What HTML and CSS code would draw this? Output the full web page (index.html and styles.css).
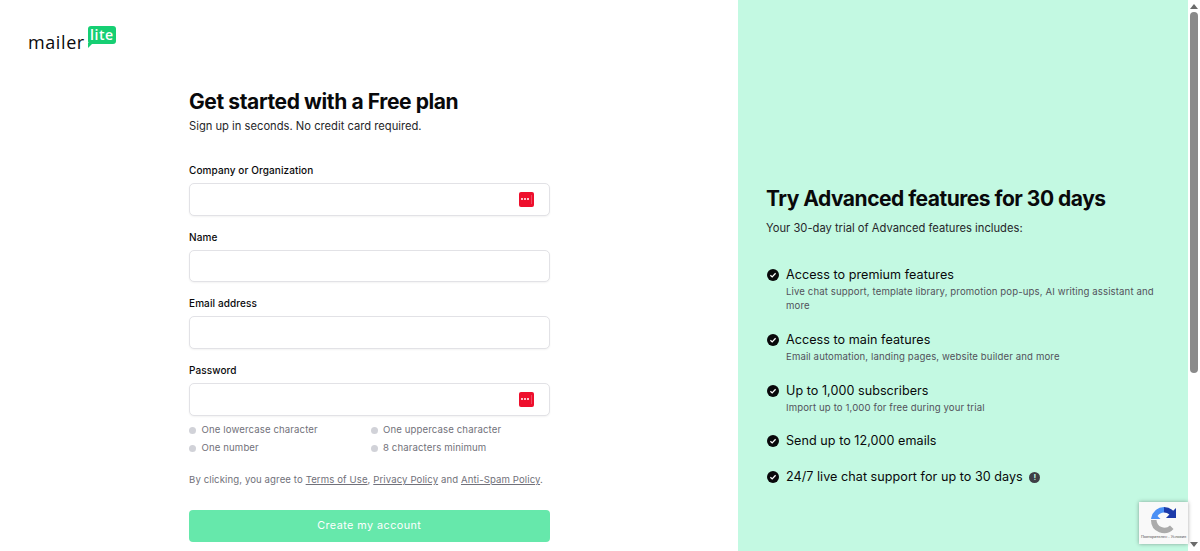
FILE: index.html
```html
<!DOCTYPE html>
<html>
<head>
    <title>MailerLite - Sign up</title>
    <link rel="stylesheet" href="styles.css">
</head>
<body>
    <div class="page">
        <div class="left">
            <a class="logo" href="#">
                <span class="logo-word">mailer</span>
                <span class="logo-bubble">lite</span>
            </a>
            <form class="signup">
                <h1>Get started with a Free plan</h1>
                <p class="sub">Sign up in seconds. No credit card required.</p>

                <div class="field first">
                    <label>Company or Organization</label>
                    <div class="input">
                        <span class="pass-icon"><i></i><i></i><i></i></span>
                    </div>
                </div>
                <div class="field">
                    <label>Name</label>
                    <div class="input"></div>
                </div>
                <div class="field">
                    <label>Email address</label>
                    <div class="input"></div>
                </div>
                <div class="field">
                    <label>Password</label>
                    <div class="input">
                        <span class="pass-icon"><i></i><i></i><i></i></span>
                    </div>
                </div>

                <ul class="rules">
                    <li>One lowercase character</li>
                    <li>One uppercase character</li>
                    <li>One number</li>
                    <li>8 characters minimum</li>
                </ul>

                <p class="terms">By clicking, you agree to <a href="#">Terms of Use</a>, <a href="#">Privacy Policy</a> and <a href="#">Anti-Spam Policy</a>.</p>

                <button type="button" class="submit">Create my account</button>
            </form>
        </div>

        <div class="right">
            <h2>Try Advanced features for 30 days</h2>
            <p class="intro">Your 30-day trial of Advanced features includes:</p>
            <ul class="features">
                <li>
                    <svg class="check" viewBox="0 0 12 12"><circle cx="6" cy="6" r="6" fill="#09090b"/><path d="M3.4 6.2l1.8 1.7 3.4-3.6" fill="none" stroke="#fff" stroke-width="1.3"/></svg>
                    <div>
                        <div class="feature-title">Access to premium features</div>
                        <div class="feature-text">Live chat support, template library, promotion pop-ups, AI writing assistant and more</div>
                    </div>
                </li>
                <li>
                    <svg class="check" viewBox="0 0 12 12"><circle cx="6" cy="6" r="6" fill="#09090b"/><path d="M3.4 6.2l1.8 1.7 3.4-3.6" fill="none" stroke="#fff" stroke-width="1.3"/></svg>
                    <div>
                        <div class="feature-title">Access to main features</div>
                        <div class="feature-text">Email automation, landing pages, website builder and more</div>
                    </div>
                </li>
                <li>
                    <svg class="check" viewBox="0 0 12 12"><circle cx="6" cy="6" r="6" fill="#09090b"/><path d="M3.4 6.2l1.8 1.7 3.4-3.6" fill="none" stroke="#fff" stroke-width="1.3"/></svg>
                    <div>
                        <div class="feature-title">Up to 1,000 subscribers</div>
                        <div class="feature-text">Import up to 1,000 for free during your trial</div>
                    </div>
                </li>
                <li>
                    <svg class="check" viewBox="0 0 12 12"><circle cx="6" cy="6" r="6" fill="#09090b"/><path d="M3.4 6.2l1.8 1.7 3.4-3.6" fill="none" stroke="#fff" stroke-width="1.3"/></svg>
                    <div>
                        <div class="feature-title">Send up to 12,000 emails</div>
                    </div>
                </li>
                <li>
                    <svg class="check" viewBox="0 0 12 12"><circle cx="6" cy="6" r="6" fill="#09090b"/><path d="M3.4 6.2l1.8 1.7 3.4-3.6" fill="none" stroke="#fff" stroke-width="1.3"/></svg>
                    <div>
                        <div class="feature-title">24/7 live chat support for up to 30 days <span class="info">!</span></div>
                    </div>
                </li>
            </ul>
        </div>

        <div class="scrollbar">
            <span class="arrow-up"></span>
            <span class="thumb"></span>
            <span class="arrow-down"></span>
        </div>

        <div class="recaptcha">
            <svg class="recaptcha-logo" viewBox="0 0 28 28">
                <path d="M14 1a13 13 0 0 1 9.2 3.8L26 2v10H16l3.4-3.4A8 8 0 0 0 14 6.4z" fill="#1c3aa9"/>
                <path d="M1.200 12A13 13 0 0 1 14 1v5.400A8 8 0 0 0 7.500 10L10.500 13H1z" fill="#4a90f5"/>
                <path d="M1 14h5.500A8 8 0 0 0 20 19.500L23.500 23A13 13 0 0 1 1 14z" fill="#ababab"/>
            </svg>
            <span class="recaptcha-text">Повторителен - Условия</span>
        </div>
    </div>
</body>
</html>
```

FILE: styles.css
```css
* {
    box-sizing: border-box;
}

html, body {
    height: 100%;
    margin: 0;
    overflow: hidden;
}

body {
    font-family: 'Inter', sans-serif;
    color: #09090b;
    background-color: #ffffff;
}

.page {
    position: relative;
    display: flex;
    height: 551px;
}

.left {
    width: 738px;
    flex-shrink: 0;
    padding: 26px 0 0 28px;
}

.logo {
    display: flex;
    align-items: flex-start;
    color: #09090b;
    text-decoration: none;
    height: 24px;
}

.logo-word {
    font-family: 'Open Sans', sans-serif;
    font-size: 18px;
    line-height: 24px;
    letter-spacing: 0.6px;
    margin-top: 4px;
}

.logo-bubble {
    position: relative;
    margin-left: 3px;
    width: 28px;
    height: 18px;
    border-radius: 3px;
    background-color: #16cf73;
    color: #ffffff;
    font-family: 'Open Sans', sans-serif;
    font-size: 14px;
    font-weight: 600;
    line-height: 17px;
    letter-spacing: 0.5px;
    text-align: center;
}

.logo-bubble::after {
    content: "";
    position: absolute;
    left: 0;
    top: 17px;
    border-top: 5px solid #16cf73;
    border-right: 5px solid transparent;
}

.signup {
    width: 360.500px;
    margin: 37px 0 0 161px;
}

h1 {
    margin: 0;
    font-size: 21px;
    line-height: 30px;
    font-weight: 700;
    letter-spacing: -0.4px;
}

.sub {
    margin: -1px 0 0;
    font-size: 11.200px;
    line-height: 20px;
    color: #27272a;
}

.field {
    margin-top: 13px;
}

.field.first {
    margin-top: 26px;
}

label {
    display: block;
    font-size: 10px;
    line-height: 16px;
    font-weight: 500;
    letter-spacing: 0.1px;
    margin-bottom: 5px;
}

.input {
    display: flex;
    align-items: center;
    justify-content: flex-end;
    height: 32.670px;
    padding-right: 15px;
    background-color: #ffffff;
    border: 1px solid #e2e2e6;
    border-radius: 5px;
    box-shadow: 0 1px 2px rgba(0, 0, 0, 0.05);
}

.pass-icon {
    display: flex;
    align-items: center;
    justify-content: center;
    gap: 1px;
    width: 15px;
    height: 15px;
    border-radius: 2px;
    background-color: #ee0f2d;
}

.pass-icon i {
    width: 2px;
    height: 2px;
    background-color: #ffffff;
    border-radius: 50%;
}

.pass-icon::after {
    content: "";
    width: 1px;
    height: 9px;
    margin-left: 1px;
    background-color: #f14a60;
}

.rules {
    display: grid;
    grid-template-columns: 181.500px 1fr;
    row-gap: 2px;
    margin: 6.500px 0 0;
    padding: 0;
    list-style: none;
}

.rules li {
    display: flex;
    align-items: center;
    font-size: 9.600px;
    line-height: 16px;
    letter-spacing: 0.12px;
    color: #71717a;
}

.rules li::before {
    content: "";
    width: 7px;
    height: 7px;
    margin-right: 5.500px;
    border-radius: 50%;
    background-color: #d1d2d8;
}

.terms {
    margin: 16px 0 0;
    font-size: 9.600px;
    line-height: 16px;
    letter-spacing: 0.1px;
    color: #71717a;
}

.terms a {
    color: #71717a;
}

.submit {
    display: block;
    width: 100%;
    height: 32px;
    margin-top: 22px;
    padding: 0 0 2px;
    border: none;
    border-radius: 4px;
    background-color: #66e8ab;
    color: #ffffff;
    font-family: 'Inter', sans-serif;
    font-size: 10.800px;
    letter-spacing: 0.45px;
}

.right {
    flex: 1;
    padding: 185px 24px 0 28px;
    background-color: #c3f9e2;
}

h2 {
    margin: 0;
    font-size: 21px;
    line-height: 28px;
    font-weight: 700;
    letter-spacing: -0.5px;
}

.intro {
    margin: 7px 0 0;
    font-size: 11.200px;
    line-height: 16px;
    color: #27272a;
}

.features {
    margin: 29px 0 0 1px;
    padding: 0;
    list-style: none;
}

.features li {
    display: flex;
    gap: 7px;
    margin-bottom: 16.200px;
}

.check {
    flex-shrink: 0;
    width: 12px;
    height: 12px;
    margin-top: 4px;
}

.feature-title {
    font-size: 12.600px;
    line-height: 20px;
    letter-spacing: 0.04px;
}

.feature-text {
    font-size: 9.600px;
    line-height: 14.400px;
    letter-spacing: 0.12px;
    color: #52525b;
}

.info {
    display: inline-block;
    width: 11px;
    height: 11px;
    margin-left: 3px;
    border-radius: 50%;
    background-color: #3f3f46;
    color: #c3f9e2;
    font-size: 8px;
    font-weight: 700;
    line-height: 11px;
    text-align: center;
    vertical-align: 1px;
}

.scrollbar {
    display: flex;
    flex-direction: column;
    align-items: center;
    width: 12px;
    flex-shrink: 0;
    background-color: #ffffff;
    padding: 4px 0;
}

.thumb {
    width: 8px;
    height: 361px;
    margin-top: 3px;
    border-radius: 4px;
    background-color: #8a8a8a;
}

.arrow-up {
    border-left: 4px solid transparent;
    border-right: 4px solid transparent;
    border-bottom: 5px solid #6b6b6b;
}

.arrow-down {
    margin-top: auto;
    border-left: 4px solid transparent;
    border-right: 4px solid transparent;
    border-top: 5px solid #6b6b6b;
}

.recaptcha {
    position: absolute;
    left: 1139px;
    top: 502px;
    display: flex;
    flex-direction: column;
    align-items: center;
    width: 49px;
    height: 42px;
    padding-top: 4px;
    background-color: #f9f9f9;
    box-shadow: 0 0 4px rgba(0, 0, 0, 0.35);
}

.recaptcha-logo {
    width: 28px;
    height: 28px;
}

.recaptcha-text {
    font-family: 'Liberation Sans', sans-serif;
    font-size: 4px;
    line-height: 6px;
    color: #555555;
    white-space: nowrap;
}
```
